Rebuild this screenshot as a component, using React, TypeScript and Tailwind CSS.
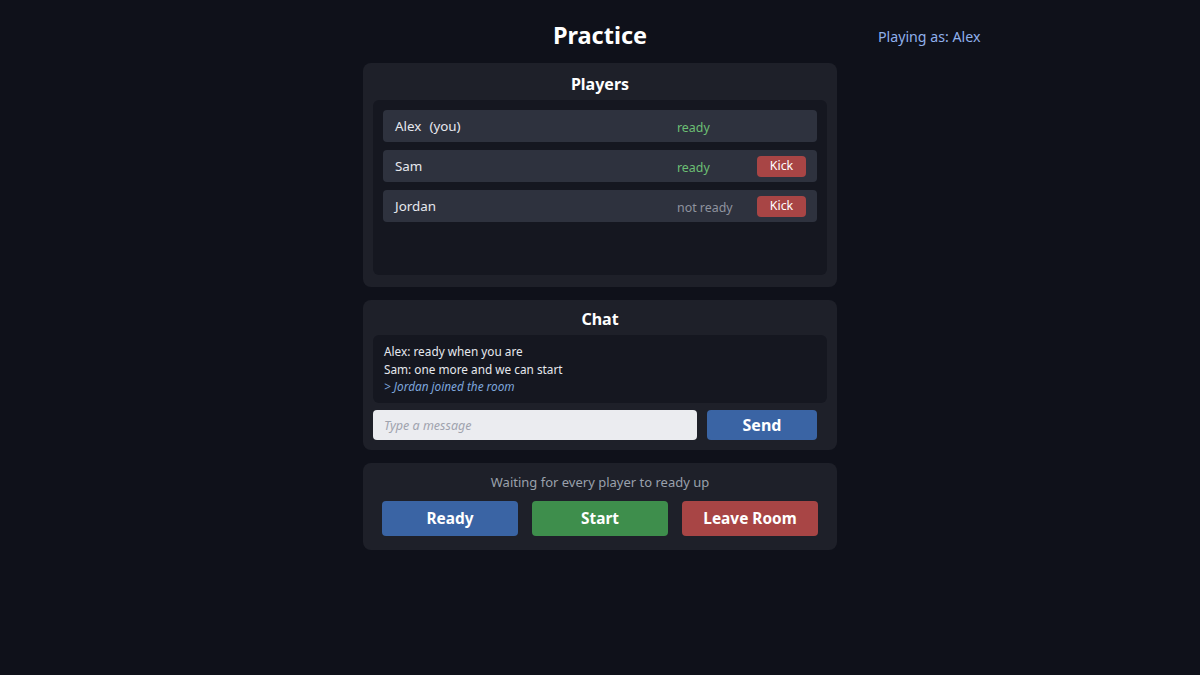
const players = [
  { name: 'Alex', you: true, ready: true },
  { name: 'Sam', you: false, ready: true },
  { name: 'Jordan', you: false, ready: false },
];

const messages = [
  { text: 'Alex: ready when you are', system: false },
  { text: 'Sam: one more and we can start', system: false },
  { text: '> Jordan joined the room', system: true },
];

export default function App() {
  return (
    <div
      className="min-h-screen w-full bg-[#0f111a] text-[#e6e8ee]"
      style={{ fontFamily: '"Noto Sans", "Open Sans", sans-serif' }}
    >
      <div className="relative mx-auto w-[474px] pt-[18px]">
        {/* Header */}
        <h1 className="text-center text-[23.5px] font-bold leading-[34px] text-white">Practice</h1>
        <div className="absolute left-[515px] top-[26px] whitespace-nowrap text-[14.2px] text-[#8fb0ec]">
          Playing as: Alex
        </div>

        {/* Players */}
        <section className="mt-[11px] rounded-lg bg-[#1e2029] px-[10px] pb-[12px] pt-[10px]">
          <h2 className="text-center text-[16px] font-bold leading-[22px] text-white">Players</h2>
          <div className="mt-[5px] flex h-[175px] flex-col gap-[8px] rounded-md bg-[#151720] p-[10px]">
            {players.map((p) => (
              <div
                key={p.name}
                className="flex h-[32px] items-center rounded bg-[#2e323e] pl-[12px] pr-[11px]"
              >
                <span className="mt-[1px] flex-1 text-[13.4px] text-[#e6e8ee]">
                  {p.name}
                  {p.you && <span className="ml-[8px]">(you)</span>}
                </span>
                <span
                  className={`mt-[4px] w-[80px] text-[12.4px] ${p.ready ? 'text-[#6cbf74]' : 'text-[#8e939e]'}`}
                >
                  {p.ready ? 'ready' : 'not ready'}
                </span>
                <div className="flex w-[49px] justify-end">
                  {!p.you && (
                    <button className="h-[21px] w-[49px] rounded bg-[#a84545] text-[12.4px] text-white">
                      Kick
                    </button>
                  )}
                </div>
              </div>
            ))}
          </div>
        </section>

        {/* Chat */}
        <section className="mt-[13px] rounded-lg bg-[#1e2029] px-[10px] pb-[10px] pt-[8px]">
          <h2 className="text-center text-[16px] font-bold leading-[22px] text-white">Chat</h2>
          <div className="mt-[5px] h-[68px] rounded-md bg-[#151720] px-[11px] pt-[8px] text-[11.8px] leading-[17.5px]">
            {messages.map((m) => (
              <div key={m.text} className={m.system ? 'italic text-[#7ea6dc]' : 'text-[#e6e8ee]'}>
                {m.text}
              </div>
            ))}
          </div>
          <div className="mt-[7px] flex gap-[10px] pr-[10px]">
            <input
              placeholder="Type a message"
              className="h-[30px] flex-1 rounded bg-[#ebecf0] px-[11px] text-[12.5px] text-[#222] outline-none placeholder:italic placeholder:text-[#a0a3ae]"
            />
            <button className="h-[30px] w-[110px] rounded bg-[#3a64a4] text-[16px] font-bold text-white">
              Send
            </button>
          </div>
        </section>

        {/* Actions */}
        <section className="mt-[13px] rounded-lg bg-[#1e2029] px-[19px] pb-[14px] pt-[9px]">
          <p className="text-center text-[13px] leading-[20px] text-[#9aa0ac]">
            Waiting for every player to ready up
          </p>
          <div className="mt-[9px] grid grid-cols-3 gap-[14px]">
            <button className="h-[35px] rounded bg-[#3a64a4] text-[15.4px] font-bold text-white">Ready</button>
            <button className="h-[35px] rounded bg-[#3e8e4c] text-[15.4px] font-bold text-white">Start</button>
            <button className="h-[35px] rounded bg-[#a84545] text-[15.4px] font-bold text-white">Leave Room</button>
          </div>
        </section>
      </div>
    </div>
  );
}
